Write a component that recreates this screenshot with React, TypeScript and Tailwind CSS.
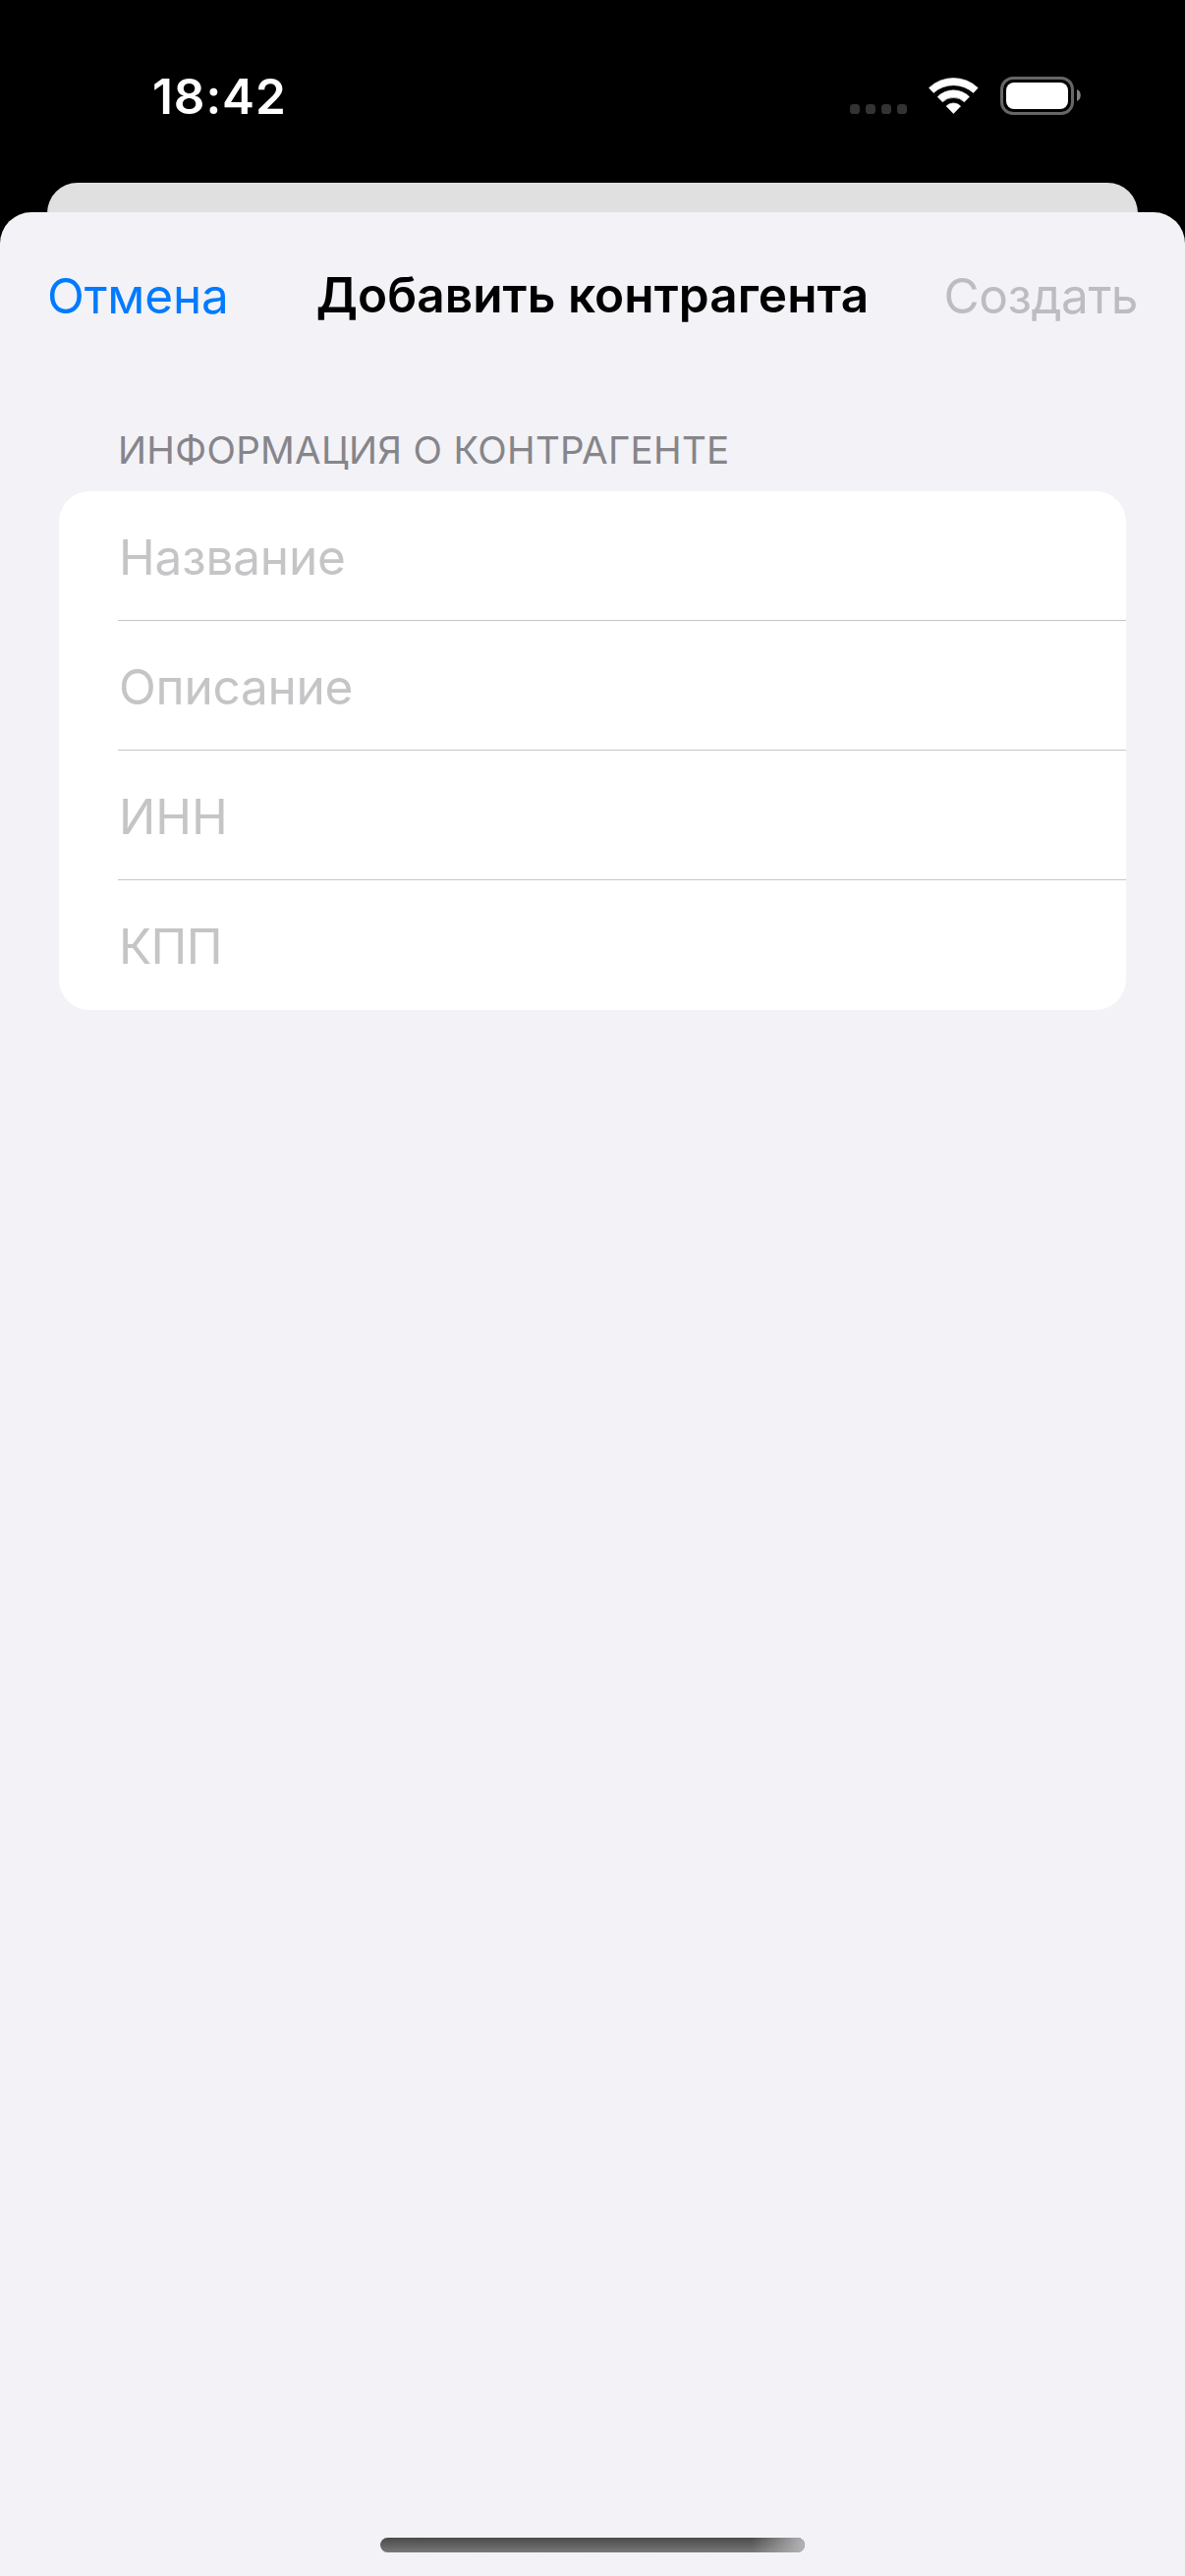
const fields = [
  { label: 'Название', tracking: 'tracking-[-0.19px]' },
  { label: 'Описание', tracking: 'tracking-[-0.25px]' },
  { label: 'ИНН', tracking: 'tracking-[0px]' },
  { label: 'КПП', tracking: 'tracking-[-0.7px]' },
];

function StatusIcons() {
  return (
    <svg className="h-[40px] w-[236px]" viewBox="865 78 236 40" fill="none">
      <g fill="#333333">
        <rect x="865" y="106" width="10" height="10" rx="3.6" />
        <rect x="881" y="106" width="10" height="10" rx="3.6" />
        <rect x="897" y="106" width="10" height="10" rx="3.6" />
        <rect x="913" y="106" width="10" height="10" rx="3.6" />
      </g>
      <g fill="#ffffff" stroke="#ffffff" strokeWidth="0.6" strokeLinejoin="round" transform="translate(945 79)">
        <path d="M0.5 10.4A36 36 0 0 1 50.2 10.4L45.6 15.4A30.6 30.6 0 0 0 5.1 15.4Z" />
        <path d="M9.2 19.6A22.7 22.7 0 0 1 41.5 19.6L36.4 24.8A16 16 0 0 0 14.3 24.8Z" />
        <path d="M18.1 29A10 10 0 0 1 32.6 29L25.35 36.6Z" />
      </g>
      <rect x="1019.5" y="79.5" width="72" height="36" rx="11.5" stroke="#666666" strokeWidth="3" />
      <rect x="1024" y="84" width="63" height="27" rx="8" fill="#ffffff" />
      <path d="M1096 91C1101 92.500 1101 101.500 1096 103Z" fill="#808080" />
    </svg>
  );
}

export default function App() {
  return (
    <div className="flex h-[2622px] w-[1206px] flex-col overflow-hidden bg-black font-['Inter',sans-serif] text-[49.5px]">
      <div className="flex h-[186px] items-start justify-between pr-[105px] pl-[155px]">
        <span className="mt-[68px] leading-[60px] font-semibold tracking-[0.9px] text-white">18:42</span>
        <div className="mt-[78px]">
          <StatusIcons />
        </div>
      </div>

      <div className="mx-[48px] -mb-[30px] h-[60px] shrink-0 rounded-t-[31px] bg-[#e0e0e0]" />

      <main className="relative flex flex-1 flex-col rounded-t-[32px] bg-[#f2f2f7]">
        <header className="flex h-[168px] items-center justify-between pr-[48px] pl-[48px]">
          <button className="mt-[2px] w-[199px] text-left leading-[60px] tracking-[-0.19px] text-[#007aff]">Отмена</button>
          <h1 className="whitespace-nowrap leading-[60px] font-semibold tracking-[0.08px] text-black">Добавить контрагента</h1>
          <button className="mt-[2px] w-[199px] text-right leading-[60px] tracking-[-0.45px] text-[#bdbcc1]">Создать</button>
        </header>

        <section className="mt-[49px] px-[60px]">
          <h2 className="mb-[17px] pl-[60px] text-[38.5px] leading-[50px] tracking-[0.3px] text-[#86858a]">
            ИНФОРМАЦИЯ О КОНТРАГЕНТЕ
          </h2>
          <ul className="h-[528px] overflow-hidden rounded-[31px] bg-white pl-[60px]">
            {fields.map((f, i) => (
              <li
                key={f.label}
                className={`flex h-[132px] items-center text-[#c5c5c7] ${i < fields.length - 1 ? 'border-b border-[#c6c6c8]' : 'pb-px'}`}
              >
                <span className={`mt-[3px] ml-px leading-[60px] ${f.tracking}`}>{f.label}</span>
              </li>
            ))}
          </ul>
        </section>

        <div className="mx-auto mt-auto mb-[24px] h-[15px] w-[432px] overflow-hidden rounded-full bg-linear-to-b from-[#4a4a4b] to-[#78787a]">
          <div className="ml-auto h-full w-[54px] bg-linear-to-r from-transparent to-[#b4b4b6]" />
        </div>
      </main>
    </div>
  );
}
